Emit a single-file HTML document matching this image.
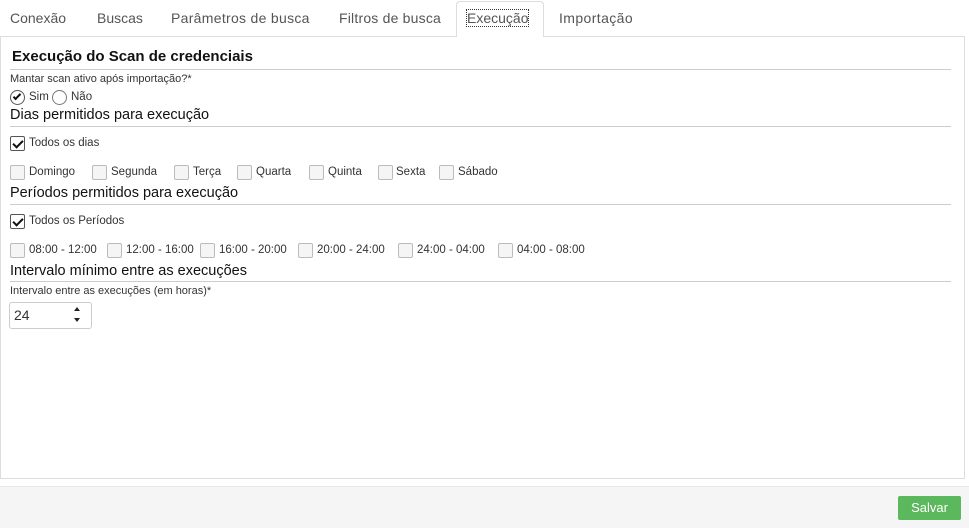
<!DOCTYPE html>
<html><head><meta charset="utf-8"><style>
*{margin:0;padding:0;box-sizing:border-box}
body{width:969px;height:528px;background:#fff;font-family:"Liberation Sans",sans-serif;color:#222;position:relative;overflow:hidden}
.a{position:absolute;white-space:nowrap}
.tab{position:absolute;top:10px;font-size:14px;color:#555}
.line{position:absolute;left:10px;width:941px;height:1px;background:#ccc}
.h{position:absolute;left:10px;font-size:14.5px;color:#111}
.cb{position:absolute;width:15px;height:15px;border:1px solid #bbb;border-radius:2px;background:#f5f5f5}
.cb.on{border-color:#555;background:#fff}
.cb.on:after{content:"";position:absolute;left:4px;top:1px;width:4px;height:8px;border:solid #111;border-width:0 2px 2px 0;transform:rotate(45deg)}
.lb{position:absolute;font-size:11.5px;color:#333}
</style></head><body>
<div class="a" style="left:0;top:36px;width:965px;height:443px;border:1px solid #ddd;"></div>
<div class="a" style="left:456px;top:1px;width:88px;height:36px;border:1px solid #ddd;border-bottom:none;border-radius:4px 4px 0 0;background:#fff"></div>
<div class="tab" style="left:10px">Conexão</div>
<div class="tab" style="left:97px">Buscas</div>
<div class="tab" style="left:171px;letter-spacing:0.3px">Parâmetros de busca</div>
<div class="tab" style="left:339px;letter-spacing:0.2px">Filtros de busca</div>
<div class="tab" style="left:467px;outline:1px dotted #333;line-height:16px">Execução</div>
<div class="tab" style="left:559px;letter-spacing:0.4px">Importação</div>

<div class="h" style="top:48px;left:12px;font-weight:bold;font-size:15px">Execução do Scan de credenciais</div>
<div class="line" style="top:69px"></div>
<div class="lb" style="left:10px;top:73px;font-size:11px">Mantar scan ativo após importação?*</div>
<div class="a" style="left:10px;top:90px;width:15px;height:15px;border:1px solid #555;border-radius:50%"></div>
<div class="a" style="left:15px;top:92px;width:4px;height:8px;border:solid #111;border-width:0 2px 2px 0;transform:rotate(45deg)"></div>
<div class="lb" style="left:29px;top:91px">Sim</div>
<div class="a" style="left:52px;top:90px;width:15px;height:15px;border:1px solid #777;border-radius:50%"></div>
<div class="lb" style="left:71px;top:91px">Não</div>

<div class="h" style="top:107px">Dias permitidos para execução</div>
<div class="line" style="top:126px"></div>
<div class="cb on" style="left:10px;top:136px"></div><div class="lb" style="left:29px;top:137px">Todos os dias</div>
<div class="cb" style="left:10px;top:165px"></div><div class="lb" style="left:29px;top:166px">Domingo</div>
<div class="cb" style="left:92px;top:165px"></div><div class="lb" style="left:111px;top:166px">Segunda</div>
<div class="cb" style="left:174px;top:165px"></div><div class="lb" style="left:193px;top:166px">Terça</div>
<div class="cb" style="left:237px;top:165px"></div><div class="lb" style="left:256px;top:166px">Quarta</div>
<div class="cb" style="left:309px;top:165px"></div><div class="lb" style="left:328px;top:166px">Quinta</div>
<div class="cb" style="left:378px;top:165px"></div><div class="lb" style="left:396px;top:166px">Sexta</div>
<div class="cb" style="left:439px;top:165px"></div><div class="lb" style="left:458px;top:166px">Sábado</div>

<div class="h" style="top:185px">Períodos permitidos para execução</div>
<div class="line" style="top:204px"></div>
<div class="cb on" style="left:10px;top:214px"></div><div class="lb" style="left:29px;top:215px">Todos os Períodos</div>
<div class="cb" style="left:10px;top:243px"></div><div class="lb" style="left:29px;top:244px">08:00 - 12:00</div>
<div class="cb" style="left:107px;top:243px"></div><div class="lb" style="left:126px;top:244px">12:00 - 16:00</div>
<div class="cb" style="left:200px;top:243px"></div><div class="lb" style="left:219px;top:244px">16:00 - 20:00</div>
<div class="cb" style="left:298px;top:243px"></div><div class="lb" style="left:317px;top:244px">20:00 - 24:00</div>
<div class="cb" style="left:398px;top:243px"></div><div class="lb" style="left:417px;top:244px">24:00 - 04:00</div>
<div class="cb" style="left:498px;top:243px"></div><div class="lb" style="left:517px;top:244px">04:00 - 08:00</div>

<div class="h" style="top:263px">Intervalo mínimo entre as execuções</div>
<div class="line" style="top:281px"></div>
<div class="lb" style="left:10px;top:285px;font-size:11px">Intervalo entre as execuções (em horas)*</div>
<div class="a" style="left:9px;top:302px;width:83px;height:27px;border:1px solid #ccc;border-radius:3px"></div>
<div class="a" style="left:14px;top:307px;font-size:14px;color:#333">24</div>
<div class="a" style="left:74px;top:304px;width:0;height:0;border:3px solid transparent;border-bottom:4px solid #222"></div>
<div class="a" style="left:74px;top:318px;width:0;height:0;border:3px solid transparent;border-top:4px solid #222"></div>

<div class="a" style="left:0;top:486px;width:969px;height:42px;background:#f5f5f5;border-top:1px solid #e8e8e8"></div>
<div class="a" style="left:898px;top:496px;width:63px;height:24px;background:#5cb85c;border-radius:2px;color:#fff;font-size:13px;text-align:center;line-height:24px">Salvar</div>
</body></html>
